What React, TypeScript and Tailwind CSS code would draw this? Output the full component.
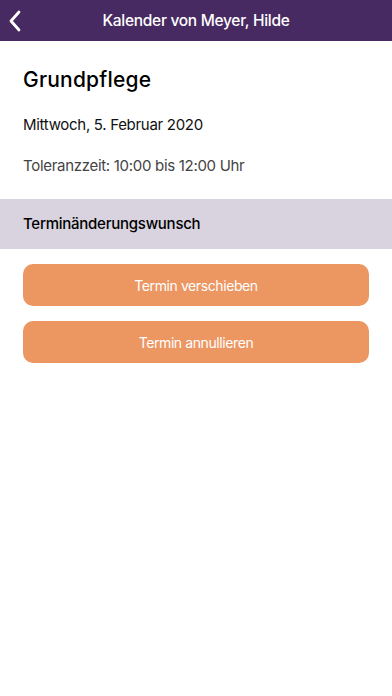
import React from "react";

export default function App() {
  return (
    <div className="w-[392px] h-[696px] bg-white overflow-hidden" style={{ fontFamily: "Inter, 'Liberation Sans', sans-serif" }}>
      <div className="h-[41px] bg-[#482a62] flex items-center relative">
        <svg className="absolute left-[8px] top-[10px]" width="14" height="22" viewBox="0 0 14 22" fill="none">
          <path d="M11 2 L3 11 L11 20" stroke="white" strokeWidth="2.8" strokeLinecap="round" strokeLinejoin="round" />
        </svg>
        <div className="w-full text-center text-white text-[15.5px] tracking-[-0.3px] font-medium">Kalender von Meyer, Hilde</div>
      </div>
      <div className="px-[23px] pt-[24px]">
        <div className="text-[21px] text-black leading-[30px] font-medium tracking-[0.2px]">Grundpflege</div>
        <div className="text-[15px] text-[#111] mt-[20px] leading-[20px] tracking-[-0.3px]">Mittwoch, 5. Februar 2020</div>
        <div className="text-[15px] text-[#444] mt-[21px] leading-[20px] tracking-[-0.3px]">Toleranzzeit: 10:00 bis 12:00 Uhr</div>
      </div>
      <div className="mt-[23px] h-[50px] bg-[#d8d3de] flex items-center px-[23px] text-[15px] text-black font-medium tracking-[-0.25px]">
        Terminänderungswunsch
      </div>
      <div className="px-[23px] pt-[15px] flex flex-col gap-[15px]">
        <button className="h-[42px] rounded-[10px] bg-[#ec9662] text-white text-[14px] tracking-[-0.4px]">Termin verschieben</button>
        <button className="h-[42px] rounded-[10px] bg-[#ec9662] text-white text-[14px] tracking-[-0.4px]">Termin annullieren</button>
      </div>
    </div>
  );
}
